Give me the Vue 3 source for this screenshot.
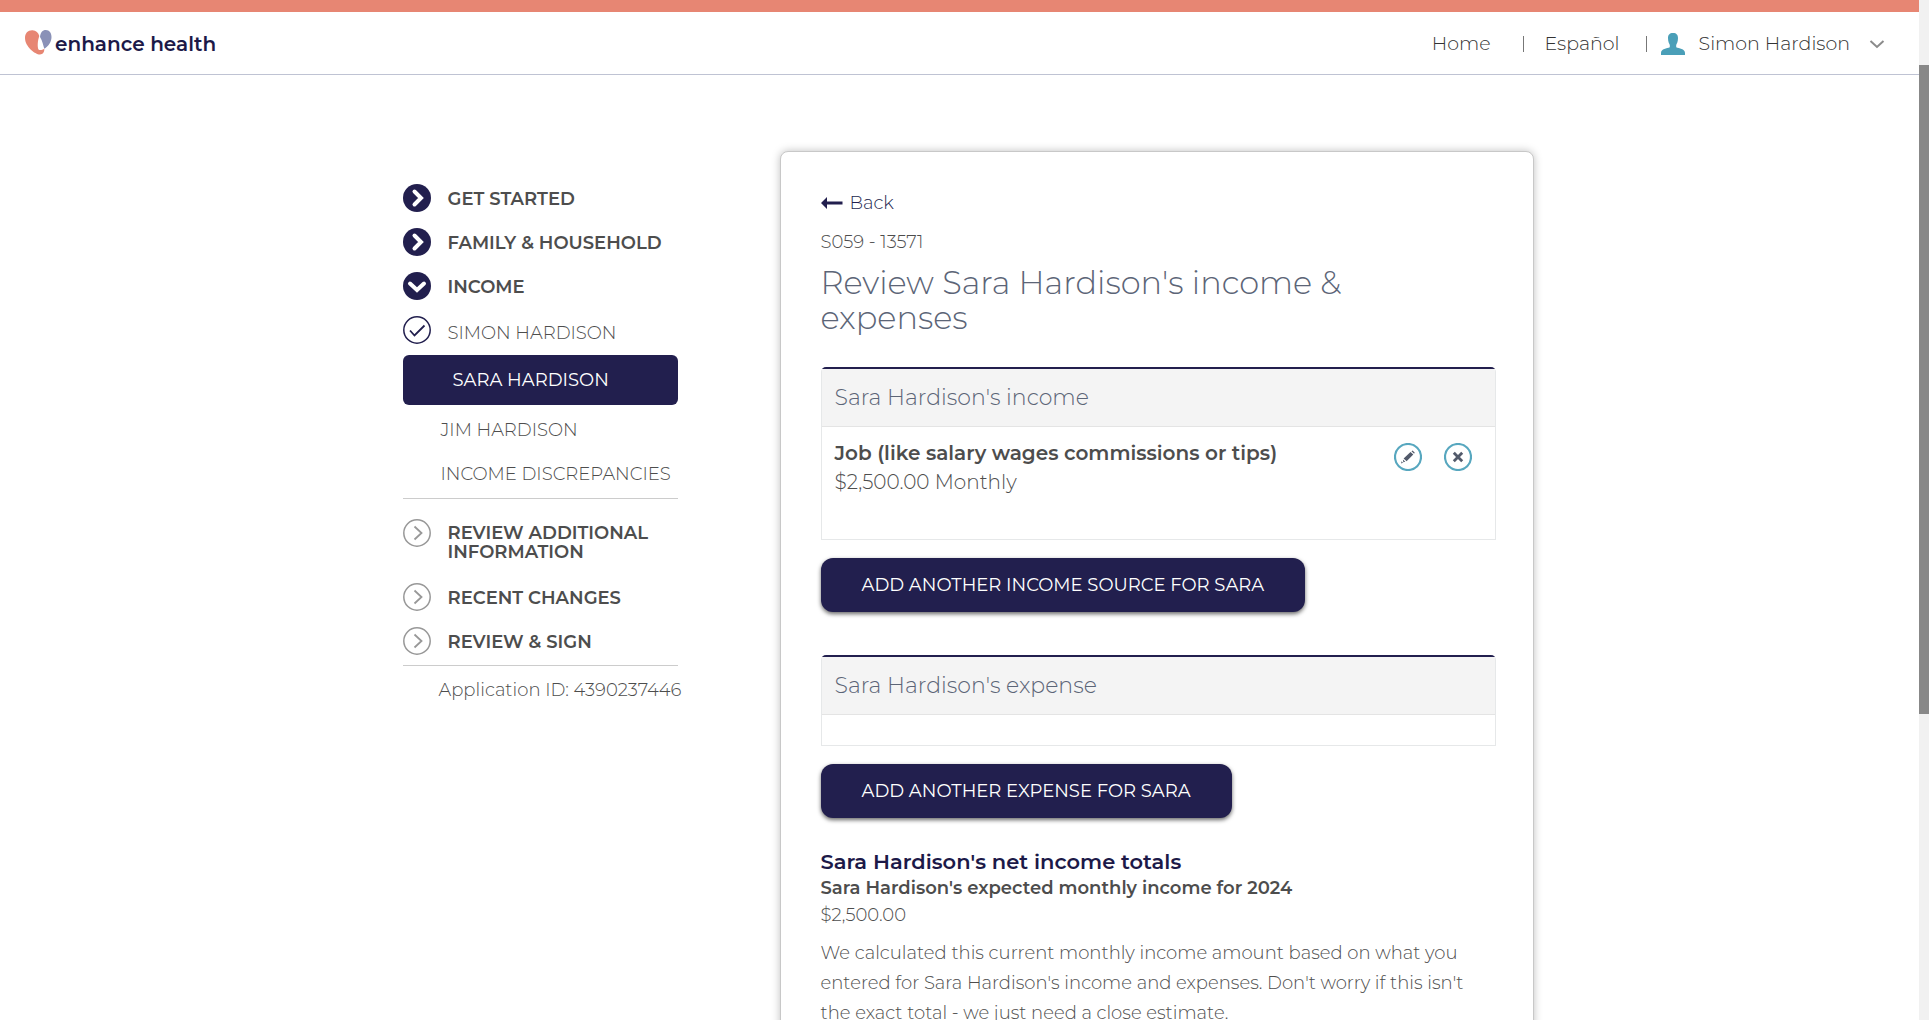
<script setup>
const steps = [
  { label: 'Get started', icon: 'right' },
  { label: 'Family & household', icon: 'right' },
  { label: 'Income', icon: 'down' },
]
const laterSteps = ['Recent changes', 'Review & sign']
</script>

<template>
  <div class="app">
    <div class="page">
      <header class="top">
        <a class="brand" href="#">
          <svg width="27" height="26" viewBox="0 0 27 26" aria-hidden="true">
            <path fill="#e78673" d="M0 8C0 3 3 0 7.500 0.200C11 0.400 13.500 2.500 14.300 6C12.500 11 12.300 17 13.500 19.500C14.500 20.500 17.500 20 19.300 18.800C19.500 22 18 24.500 15 24.500C10 24.500 0 16.500 0 8Z" />
            <path fill="#8a91b7" d="M15 7C15.500 2.500 17.500 0 20.800 0C24.500 0 26.500 3 26.500 7C26.500 12 23.500 16 19.300 18.800C18.300 15.500 17.500 11 15 7Z" />
          </svg>
          <span>enhance health</span>
        </a>
        <nav class="links" aria-label="Account">
          <a href="#" class="home">Home</a>
          <span class="bar"></span>
          <a href="#" class="lang">Español</a>
          <span class="bar"></span>
          <button type="button" class="user">
            <svg width="24" height="22" viewBox="0 0 24 22" aria-hidden="true">
              <path fill="#4a9fb8" d="M12 0C15.500 0 17 2 17 5C17 9 15.800 10.500 15.200 12V14.200C18 15.500 24 15.500 24 20V22H0V20C0 15.500 6 15.500 8.800 14.200V12C8.200 10.500 7 9 7 5C7 2 8.500 0 12 0Z" />
            </svg>
            <span>Simon Hardison</span>
            <svg class="caret" width="16" height="10" viewBox="0 0 16 10" aria-hidden="true">
              <path d="M1.500 2L8 8L14.500 2" fill="none" stroke="#8b8b8b" stroke-width="2" />
            </svg>
          </button>
        </nav>
      </header>

      <div class="layout">
        <nav class="steps" aria-label="Application steps">
          <a v-for="s in steps" :key="s.label" href="#" class="step">
            <svg width="28" height="28" viewBox="0 0 28 28" aria-hidden="true">
              <circle cx="14" cy="14" r="14" fill="#221f4e" />
              <path :d="s.icon === 'right' ? 'M11.500 7.500L18 14L11.500 20.500' : 'M7 11.500L14 18L21 11.500'" fill="none" stroke="#fff" stroke-width="4" stroke-linecap="round" />
            </svg>
            <span>{{ s.label }}</span>
          </a>
          <a href="#" class="step done">
            <svg width="28" height="28" viewBox="0 0 28 28" aria-hidden="true">
              <circle cx="14" cy="14" r="13.200" fill="#fff" stroke="#221f4e" stroke-width="1.500" />
              <path d="M7 14.500L11.500 19.500L21.500 9.500" fill="none" stroke="#221f4e" stroke-width="1.800" />
            </svg>
            <span>Simon Hardison</span>
          </a>
          <a href="#" class="current" aria-current="step">Sara Hardison</a>
          <a href="#" class="sub">Jim Hardison</a>
          <a href="#" class="sub">Income discrepancies</a>
          <hr />
          <a href="#" class="step wrapped">
            <svg width="28" height="28" viewBox="0 0 28 28" aria-hidden="true">
              <circle cx="14" cy="14" r="13.200" fill="none" stroke="#989898" stroke-width="1.500" />
              <path d="M11.500 7.500L18.500 14L11.500 20.500" fill="none" stroke="#989898" stroke-width="1.800" />
            </svg>
            <span>Review additional information</span>
          </a>
          <a v-for="label in laterSteps" :key="label" href="#" class="step">
            <svg width="28" height="28" viewBox="0 0 28 28" aria-hidden="true">
              <circle cx="14" cy="14" r="13.200" fill="none" stroke="#989898" stroke-width="1.500" />
              <path d="M11.500 7.500L18.500 14L11.500 20.500" fill="none" stroke="#989898" stroke-width="1.800" />
            </svg>
            <span>{{ label }}</span>
          </a>
          <hr />
          <p class="app-id">Application ID: 4390237446</p>
        </nav>

        <main class="card">
          <a href="#" class="back">
            <svg width="22" height="12" viewBox="0 0 22 12" aria-hidden="true">
              <path fill="#221f4e" d="M0 6L6 0V4.500H21.500V7.500H6V12Z" />
            </svg>
            <span>Back</span>
          </a>
          <p class="code">S059 - 13571</p>
          <h1>Review Sara Hardison's income &amp; expenses</h1>

          <section class="panel">
            <h2>Sara Hardison's income</h2>
            <div class="panel-body">
              <div class="entry">
                <strong>Job (like salary wages commissions or tips)</strong>
                <span>$2,500.00 Monthly</span>
              </div>
              <div class="actions">
                <button type="button" aria-label="Edit income">
                  <svg width="28" height="28" viewBox="0 0 28 28" aria-hidden="true">
                    <circle cx="14" cy="14" r="13" fill="#fff" stroke="#57a7bf" stroke-width="2.200" />
                    <path fill="#525a6b" d="M16.500 9L19.300 11.600L12.600 18.300L9.600 15.600ZM17.500 8.200L18.500 7.500L20.700 9.500L20.100 10.800ZM8.900 16.600L11.300 18.800L9.300 19.200ZM7.400 18.200L9 19.800L7.200 20.400Z" />
                  </svg>
                </button>
                <button type="button" aria-label="Remove income">
                  <svg width="28" height="28" viewBox="0 0 28 28" aria-hidden="true">
                    <circle cx="14" cy="14" r="13" fill="#fff" stroke="#57a7bf" stroke-width="2.200" />
                    <path d="M9.800 9.800L18.200 18.200M18.200 9.800L9.800 18.200" stroke="#525a6b" stroke-width="2.800" />
                  </svg>
                </button>
              </div>
            </div>
          </section>
          <button type="button" class="primary">Add another income source for Sara</button>

          <section class="panel">
            <h2>Sara Hardison's expense</h2>
            <div class="panel-body empty"></div>
          </section>
          <button type="button" class="primary">Add another expense for Sara</button>

          <section class="totals">
            <h3>Sara Hardison's net income totals</h3>
            <h4>Sara Hardison's expected monthly income for 2024</h4>
            <p class="amount">$2,500.00</p>
            <p class="note">
              We calculated this current monthly income amount based on what you
              entered for Sara Hardison's income and expenses. Don't worry if this isn't
              the exact total - we just need a close estimate.
            </p>
          </section>
        </main>
      </div>
    </div>
    <div class="scroll-track"><div class="scroll-thumb"></div></div>
  </div>
</template>

<style>
body {
  margin: 0;
  background: #fff;
}
</style>

<style scoped>
.app {
  display: flex;
  height: 100vh;
  overflow: hidden;
  font-family: Montserrat, Inter, "Open Sans", sans-serif;
  font-size: 18px;
  font-weight: 300;
  color: #4d4d4d;
}
.app * {
  box-sizing: border-box;
}
.page {
  flex: 1;
  min-width: 0;
  overflow: hidden;
}
.scroll-track {
  width: 10px;
  padding-top: 65px;
  background: #f1f1f1;
}
.scroll-thumb {
  height: 68%;
  background: #888;
}
a {
  color: inherit;
  text-decoration: none;
}
button {
  font: inherit;
  color: inherit;
  border: 0;
  background: none;
  padding: 0;
  cursor: pointer;
}
svg {
  display: block;
  flex: none;
}
h1,
h2,
h3,
h4,
p {
  margin: 0;
}

.top {
  display: flex;
  justify-content: space-between;
  align-items: center;
  height: 75px;
  padding: 0 34px 0 25px;
  border-top: 12px solid #e78673;
  border-bottom: 1px solid #bfc3d3;
}
.brand {
  display: flex;
  align-items: center;
  gap: 3px;
  font-size: 20px;
  font-weight: 600;
  line-height: 24px;
  color: #1c1948;
}
.brand span {
  padding-top: 2px;
}
.links {
  display: flex;
  align-items: center;
  padding-top: 2px;
  font-size: 19px;
  line-height: 24px;
  color: #333;
}
.bar {
  width: 1px;
  height: 16px;
  background: #777;
}
.home {
  margin-right: 32px;
}
.lang {
  margin: 0 26px 0 21px;
}
.user {
  display: flex;
  align-items: center;
  gap: 14px;
  margin-left: 14px;
}
.caret {
  margin-left: 5px;
}

.layout {
  display: flex;
  justify-content: space-between;
  align-items: flex-start;
  max-width: 1170px;
  margin: 0 auto;
  padding: 76px 11px 0 28px;
}

.steps {
  display: flex;
  flex-direction: column;
  width: 275px;
  padding-top: 25px;
}
.step {
  display: flex;
  align-items: center;
  gap: 17px;
  height: 44px;
  font-weight: 600;
  line-height: 19px;
  text-transform: uppercase;
}
.step span {
  padding-top: 2px;
}
.step.done {
  font-weight: 300;
}
.step.done span {
  padding-top: 6px;
}
.step.wrapped {
  align-items: flex-start;
  height: 56px;
  margin-top: 6px;
}
.step.wrapped span {
  padding-top: 5px;
}
.current {
  margin: 3px 0;
  padding-left: 50px;
  border-radius: 6px;
  background: #221f4e;
  color: #fff;
  font-weight: 400;
  line-height: 50px;
  text-transform: uppercase;
}
.sub {
  padding-left: 38px;
  line-height: 44px;
  text-transform: uppercase;
  white-space: nowrap;
}
hr {
  width: 100%;
  height: 1px;
  margin: 2px 0 14px;
  border: 0;
  background: #ccc;
}
.app-id {
  padding-left: 36px;
  line-height: 20px;
  white-space: nowrap;
}

.card {
  width: 754px;
  padding: 41px 37px 40px 40px;
  border: 1px solid #c8c8c8;
  border-radius: 8px;
  box-shadow: 0 0 8px rgba(0, 0, 0, 0.25);
  background: #fff;
}
.back {
  display: flex;
  align-items: center;
  gap: 7px;
  line-height: 20px;
  color: #221f4e;
}
.code {
  margin-top: 19px;
  line-height: 20px;
}
h1 {
  margin-top: 13px;
  font-size: 32px;
  font-weight: 300;
  line-height: 35px;
  color: #5c6577;
}
.panel {
  margin-top: 32px;
  border: 1px solid #e6e8e9;
  border-top: 2px solid #221f4e;
  border-radius: 5px 5px 0 0;
}
.panel h2 {
  padding: 0 13px;
  border-bottom: 1px solid #e4e4e4;
  background: #f4f4f4;
  font-size: 22px;
  font-weight: 300;
  line-height: 57px;
  color: #5c6577;
}
.panel-body {
  display: flex;
  justify-content: space-between;
  min-height: 112px;
  padding: 12px 23px 20px 13px;
}
.panel-body.empty {
  min-height: 30px;
  padding: 0;
}
.entry {
  display: flex;
  flex-direction: column;
  font-size: 20px;
  line-height: 29px;
}
.entry strong {
  font-weight: 600;
}
.actions {
  display: flex;
  align-items: flex-start;
  gap: 22px;
  padding-top: 4px;
}
.primary {
  display: block;
  margin-top: 18px;
  padding: 1px 41px 0;
  border-radius: 12px;
  background: #221f4e;
  box-shadow: 0 2px 4px rgba(0, 0, 0, 0.6);
  color: #fff;
  font-weight: 400;
  line-height: 53px;
  text-transform: uppercase;
}
.primary + .panel {
  margin-top: 43px;
}
.totals {
  margin-top: 30px;
}
h3 {
  font-size: 21px;
  font-weight: 600;
  line-height: 27px;
  color: #1c1948;
}
h4 {
  font-size: 18px;
  font-weight: 600;
  line-height: 27px;
}
.amount {
  line-height: 27px;
}
.note {
  margin-top: 9px;
  line-height: 30px;
}
</style>
